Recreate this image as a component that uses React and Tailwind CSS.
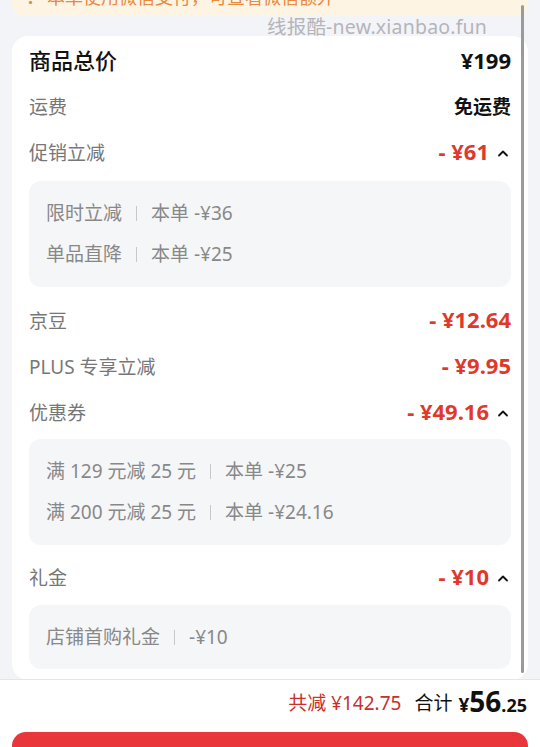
import React from "react";

const font = { fontFamily: '"Noto Sans", "Noto Sans CJK SC", sans-serif' };

function Caret() {
  return (
    <svg width="16" height="8" viewBox="0 0 16 8" className="ml-[6px]">
      <path d="M4 6.5 L8 2.5 L12 6.5" fill="none" stroke="#111" strokeWidth="1.8" strokeLinecap="round" strokeLinejoin="round" />
    </svg>
  );
}

function Row({ label, value, caret, big, h = "h-[46px]" }) {
  return (
    <div className={`flex items-center justify-between ${h}`}>
      <span className={big ? "text-[22px] font-medium text-[#111]" : "text-[19px] text-[#777]"}>{label}</span>
      <span className="flex items-center">
        {value}
        {caret && <Caret />}
      </span>
    </div>
  );
}

function Amount({ children }) {
  return <span className="mb-[4px] text-[22px] font-bold text-[#e0392c]">{children}</span>;
}

function Sep() {
  return <span className="mx-[14px] inline-block h-[15px] w-px bg-[#c8c8c8]" />;
}

function SubBox({ items, className = "" }) {
  return (
    <div className={`rounded-[12px] bg-[#f5f6f8] px-[17px] py-[12px] ${className}`}>
      {items.map((it, i) => (
        <div key={i} className="flex h-[41px] items-center text-[19px] text-[#888]">
          <span>{it[0]}</span>
          <Sep />
          <span>{it[1]}</span>
        </div>
      ))}
    </div>
  );
}

export default function App() {
  return (
    <div className="relative h-[747px] w-[540px] overflow-hidden bg-[#f3f4f8]" style={font}>
      {/* top notice banner (cut off) */}
      <div className="mx-[12px] h-[16px] overflow-hidden rounded-b-[10px] bg-[#fdf4e3]">
        <div className="-mt-[15px] flex items-center pl-[16px] text-[18px] leading-[24px] text-[#e9883f]">
          <span className="mr-[14px] font-bold">!</span>
          <span>本单使用微信支付，可查看微信额外</span>
        </div>
      </div>

      {/* watermark */}
      <div className="absolute left-[267px] top-[14px] z-10 text-[19.5px] leading-[26px] text-[#b5b5b8] tracking-[0.2px]">
        线报酷-new.xianbao.fun
      </div>

      {/* card */}
      <div className="mx-[12px] mt-[20px] rounded-[16px] bg-white pb-[11px] pl-[17px] pr-[17px]">
        <Row label="商品总价" big h="h-[48px]" value={<span className="text-[22px] font-bold text-[#111]">¥199</span>} />
        <Row label="运费" value={<span className="text-[19px] font-bold text-[#111]">免运费</span>} />
        <Row label="促销立减" caret value={<Amount>- ¥61</Amount>} />
        <SubBox className="mt-[5px]" items={[["限时立减", "本单 -¥36"], ["单品直降", "本单 -¥25"]]} />
        <div className="mt-[11px]" />
        <Row label="京豆" value={<Amount>- ¥12.64</Amount>} />
        <Row label="PLUS 专享立减" value={<Amount>- ¥9.95</Amount>} />
        <Row label="优惠券" caret value={<Amount>- ¥49.16</Amount>} />
        <SubBox className="mt-[3px]" items={[["满 129 元减 25 元", "本单 -¥25"], ["满 200 元减 25 元", "本单 -¥24.16"]]} />
        <div className="mt-[10px]" />
        <Row label="礼金" caret value={<Amount>- ¥10</Amount>} />
        <div className="mt-[4px] rounded-[12px] bg-[#f5f6f8] px-[17px] py-[11px]">
          <div className="flex h-[42px] items-center text-[19px] text-[#888]">
            <span>店铺首购礼金</span>
            <Sep />
            <span>-¥10</span>
          </div>
        </div>
      </div>

      {/* scrollbar */}
      <div className="absolute left-[521px] top-[5px] h-[668px] w-[3px] rounded-full bg-[#9a9a9a]" />

      {/* footer */}
      <div className="absolute bottom-0 left-0 right-0 top-[679px] border-t border-[#e6e6e6] bg-white">
        <div className="flex h-[46px] items-center justify-end pr-[13px]">
          <span className="text-[19px] text-[#c9302c]">共减 ¥142.75</span>
          <span className="ml-[13px] text-[19px] text-[#111]">合计</span>
          <span className="ml-[6px] flex items-baseline font-bold text-[#111]">
            <span className="text-[19px]">¥</span>
            <span className="text-[28px] leading-none">56</span>
            <span className="text-[18px]">.25</span>
          </span>
        </div>
        <div className="mx-[12px] mt-[6px] h-[40px] rounded-t-[14px] bg-[#e8363a]" />
      </div>
    </div>
  );
}
